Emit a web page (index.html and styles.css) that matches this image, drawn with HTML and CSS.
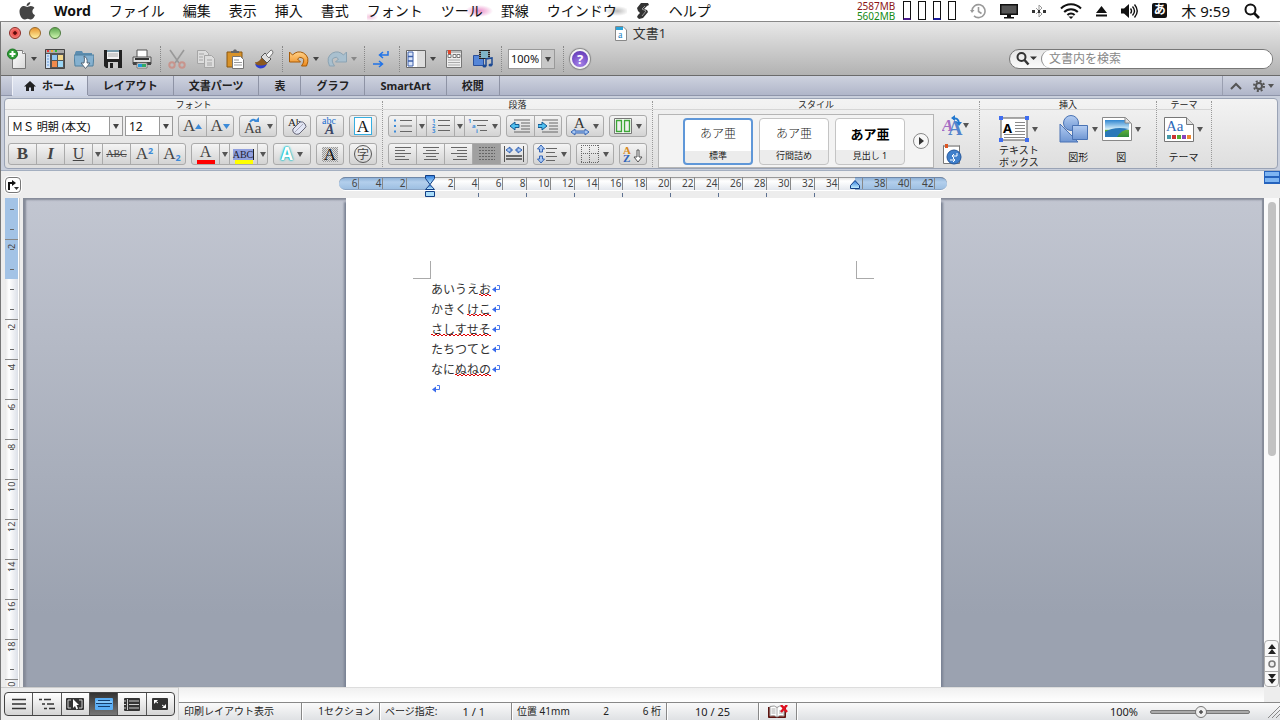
FILE: index.html
```html
<!DOCTYPE html>
<html lang="ja">
<head>
    <meta charset="UTF-8">
    <meta name="viewport" content="width=device-width, initial-scale=1.0">
    <title>文書1</title>
    <link rel="stylesheet" href="styles.css">
</head>
<body>
    <!-- shared gradients -->
    <svg class="defs" width="0" height="0" aria-hidden="true">
        <defs>
            <linearGradient id="blue" x1="0" y1="0" x2="0" y2="1"><stop offset="0" stop-color="#b4cdf2"/><stop offset="1" stop-color="#6f96d2"/></linearGradient>
            <linearGradient id="orange" x1="0" y1="0" x2="0" y2="1"><stop offset="0" stop-color="#ffd28a"/><stop offset="1" stop-color="#ee8a1c"/></linearGradient>
            <linearGradient id="paper" x1="0" y1="0" x2="1" y2="1"><stop offset="0" stop-color="#fff"/><stop offset="1" stop-color="#d8d8d8"/></linearGradient>
            <linearGradient id="marker" x1="0" y1="0" x2="0" y2="1"><stop offset="0" stop-color="#2b79dd"/><stop offset="1" stop-color="#c9f2ff"/></linearGradient>
            <linearGradient id="photo" x1="0" y1="0" x2="0" y2="1"><stop offset="0" stop-color="#2f86d0"/><stop offset=".55" stop-color="#d9f1fb"/><stop offset=".6" stop-color="#5fae3a"/><stop offset="1" stop-color="#2f8a3c"/></linearGradient>
        </defs>
    </svg>

    <nav class="menubar">
        <a href="#" class="apple" aria-label="Apple">
            <svg width="18" height="20" viewBox="0 0 18 20"><path fill="#444" d="M12.3 1c.1 2-1.600 4-3.700 4C8.400 3.100 10.300 1.200 12.300 1zM9.200 6c.8 0 2-1 3.700-1 1.300 0 2.700.7 3.500 1.900-3 1.800-2.500 5.900.6 7.100-.6 1.800-2.200 4.500-4 4.500-1.300 0-1.700-.8-3.300-.8s-2.100.8-3.300.8C4 18.500 1.500 14.300 1.500 10.700 1.500 7 3.800 5.100 6 5.100c1.500 0 2.600.9 3.200.9z"/></svg>
        </a>
        <a href="#" class="app">Word</a>
        <a href="#">ファイル</a>
        <a href="#">編集</a>
        <a href="#">表示</a>
        <a href="#">挿入</a>
        <a href="#">書式</a>
        <a href="#" class="petal-left">フォント</a>
        <a href="#" class="petal">ツール</a>
        <a href="#">罫線</a>
        <a href="#" class="petal-gray">ウインドウ</a>
        <a href="#" aria-label="スクリプト">
            <svg width="16" height="18" viewBox="0 0 16 18"><path fill="#333" d="M6 1h7l1 2-2 1-3 3 3 1 1 2-5 6-4 1-2-2 1-2 2-2-2-2-1-3z"/><path d="M10 4L7 7l4 2-4 5" fill="none" stroke="#999"/></svg>
        </a>
        <a href="#">ヘルプ</a>
        <div class="menu-extras">
            <div class="meters">
                <div class="memory"><span class="used">2587MB</span><span class="free">5602MB</span></div>
                <div class="cores"><i class="purple"></i><i></i><i class="navy"></i><i></i></div>
            </div>
            <svg width="16" height="18" viewBox="0 0 16 18" fill="none" stroke="#999" stroke-width="1.600"><path d="M2 9a6.500 6.500 0 1 1 2 4.800M8.500 5v4.500l3 2"/><path d="M0 8h4.500L2 11z" fill="#999" stroke="none"/></svg>
            <svg width="18" height="16" viewBox="0 0 18 16"><path d="M0 1h18v11H0z" fill="#111"/><path d="M1.500 2.500h15v8h-15z" fill="#555"/><path d="M7 12h4v2h3v1.500H4V14h3z" fill="#111"/></svg>
            <svg width="14" height="16" viewBox="0 0 14 16" stroke="#999" fill="none"><path d="M4 5l6 6-3 3V2l3 3-6 6"/><path d="M0 7h3v3H0zM11 7h3v3h-3zM6 7h2v3H6z" fill="#333" stroke="none"/></svg>
            <svg width="22" height="18" viewBox="0 0 22 18" fill="none" stroke="#111" stroke-width="2"><path d="M1 6.500a14 14 0 0 1 20 0M4.200 10a9.500 9.500 0 0 1 13.600 0M7.400 13a5 5 0 0 1 7.200 0"/><path d="M8.500 14.500h5L11 17z" fill="#111" stroke="none"/></svg>
            <svg width="11" height="12" viewBox="0 0 11 12" fill="#111"><path d="M5.500 1L11 8H0zM0 9.500h11v2H0z"/></svg>
            <svg width="17" height="16" viewBox="0 0 17 16" fill="none" stroke="#111" stroke-width="1.400"><path d="M0 5.500h3L8 1v14l-5-4.500H0z" fill="#111" stroke="none"/><path d="M9.500 5.500q2 2.500 0 5M11.500 3.500q4 4.500 0 9M13.500 1.500q5.500 6.500 0 13"/></svg>
            <span class="ime">あ</span>
            <span class="clock">木 9:59</span>
            <svg width="16" height="16" viewBox="0 0 16 16" fill="none" stroke="#111"><circle cx="6.500" cy="6.500" r="5" stroke-width="2"/><path d="M10 10l5 5" stroke-width="2.600"/></svg>
        </div>
    </nav>

    <div class="window">
        <header class="titlebar">
            <div class="title-row">
                <div class="lights">
                    <button class="light red" aria-label="閉じる"></button>
                    <button class="light yellow" aria-label="しまう"></button>
                    <button class="light green" aria-label="拡大"></button>
                </div>
                <h1>
                    <svg width="12" height="15" viewBox="0 0 12 15"><path d="M.5.5H8l3.500 3.500v10.500H.5z" fill="#fff" stroke="#888"/><path d="M1 1h7v3H1z" fill="#29a3d9"/><text x="3" y="12" class="doc-letter">a</text></svg>
                    文書1
                </h1>
            </div>
            <div class="toolbar">
                <button aria-label="新規作成"><svg width="20" height="22" viewBox="0 0 20 22"><path d="M5.500 2.500h10l3 3v15h-13z" fill="url(#paper)" stroke="#777"/><path d="M15.500 2.500v3h3" fill="#fff" stroke="#888"/><circle cx="5.500" cy="6" r="5" fill="#2f9e36" stroke="#1d7424"/><path d="M5.500 3v6M2.500 6h6" stroke="#fff" stroke-width="2"/></svg></button>
                <button class="drop" aria-label="新規作成メニュー"></button>
                <button aria-label="テンプレート"><svg width="20" height="20" viewBox="0 0 20 20"><path d="M.5.5h19v19H.5z" fill="#555" stroke="#444"/><path d="M1 1h18v3H1z" fill="#aaa"/><path d="M2 1h2v2H2z" fill="#e33"/><path d="M6 1h2v2H6z" fill="#ea3"/><path d="M10 1h2v2h-2z" fill="#3b3"/><path d="M1 5h4v14H1z" fill="#cfe2f7"/><path d="M2 7h2M2 10h2M2 13h2M2 16h2" stroke="#6a9bd8"/><path d="M7 6h5v5H7z" fill="#8ec6f2"/><path d="M13 6h5v5h-5z" fill="#f6d98b"/><path d="M7 12h5v6H7z" fill="#f08a4b"/><path d="M13 12h5v6h-5z" fill="#9bd6f5"/></svg></button>
                <button aria-label="開く"><svg width="20" height="20" viewBox="0 0 20 20"><path d="M1 4l1-2h6l1 2h9v12H1z" fill="#5c8db0"/><path d="M0 6h20l-1 11H1z" fill="#85b1d0" stroke="#51809f"/><path d="M10 7q4 2 3 7h3l-4.500 5.500L7 14h3q1-4 0-7z" fill="#fff" stroke="#567"/></svg></button>
                <button aria-label="保存"><svg width="20" height="20" viewBox="0 0 20 20"><path d="M1 1h18v18H3l-2-2z" fill="#222"/><path d="M4 1h12v9H4z" fill="#f2f2f2"/><path d="M4 1h12v2H4z" fill="#79a"/><path d="M5 5h10M5 7h10" stroke="#aaa"/><path d="M5 13h10v6H5z" fill="#ccc"/><path d="M7 14h3v5H7z" fill="#222"/></svg></button>
                <button aria-label="プリント"><svg width="20" height="20" viewBox="0 0 20 20"><path d="M5 1h10v8H5z" fill="#fff" stroke="#555"/><path d="M1 8h18v7H1z" fill="#ddd" stroke="#555"/><path d="M3 9h14v2H3z" fill="#333"/><path d="M1 13h18v3H1z" fill="#444"/><path d="M5 14h10v5H5z" fill="#fff" stroke="#777"/><path d="M6 15h4v3H6z" fill="#29d"/><path d="M10 15h4v3h-4z" fill="#3a6"/></svg></button>
                <span class="sep"></span>
                <button disabled aria-label="カット"><svg width="20" height="20" viewBox="0 0 20 20" fill="none"><path d="M3 1l9 13M17 1L8 14" stroke="#999" stroke-width="1.600"/><circle cx="5" cy="16" r="2.700" stroke="#c8948c" stroke-width="2"/><circle cx="15" cy="16" r="2.700" stroke="#c8948c" stroke-width="2"/></svg></button>
                <button disabled aria-label="コピー"><svg width="20" height="20" viewBox="0 0 20 20" fill="#ddd" stroke="#a5a5a5"><path d="M1.500 1.500h8l3 3v10h-11z"/><path d="M8.500 6.500h7l3 3v9h-10z"/><path d="M3 5h5M3 8h4M3 11h4M11 11h5M11 14h5M11 16h5"/></svg></button>
                <button aria-label="ペースト"><svg width="20" height="20" viewBox="0 0 20 20"><path d="M2 3h15v15H2z" fill="#d8932a" stroke="#8a5610"/><path d="M6 4V2h2l1-1.500h2L12 2h2v2z" fill="#666"/><path d="M7.500 7.500h8l3 3v9h-11z" fill="#fff" stroke="#777"/><path d="M9 11h5M9 13.500h8M9 16h8" stroke="#999"/></svg></button>
                <button aria-label="書式のコピー"><svg width="20" height="20" viewBox="0 0 20 20"><path d="M1 13q4 1 7-5l6 5q-3 6-8 6-4-1-5-6z" fill="#8c5a20"/><path d="M1 15q6 3 12 0-2 4.500-7 4.500-4-1-5-4.500z" fill="#2b3fd4"/><path d="M7 8l4-4 6 6-4 4z" fill="#ddd" stroke="#555"/><path d="M12 6l5-5q2 0 2 3l-4 5z" fill="#f4f4f4" stroke="#777"/></svg></button>
                <span class="sep"></span>
                <button aria-label="取り消し"><svg width="20" height="18" viewBox="0 0 20 18"><path d="M.5 2l3 3q5-5 11-2 7 4 3 13h-5q4-6 1-8-3-2-5 1l3 3H.5z" fill="url(#orange)" stroke="#a85b06"/></svg></button>
                <button class="drop" aria-label="取り消しメニュー"></button>
                <button disabled aria-label="やり直し"><svg width="20" height="18" viewBox="0 0 20 18"><path d="M19.500 2l-3 3q-5-5-11-2-7 4-3 13h5q-4-6-1-8 3-2 5 1l-3 3h11z" fill="#a9c0cf" stroke="#8ba3b3"/></svg></button>
                <button class="drop dim" disabled aria-label="やり直しメニュー"></button>
                <span class="sep"></span>
                <button aria-label="編集記号"><svg width="20" height="20" viewBox="0 0 20 20" fill="none" stroke="#2073e8" stroke-width="1.500"><path d="M17 2v4h-8M12 3L8.500 6l3.500 3M2 15h9M8 12l3.500 3L8 18"/></svg></button>
                <span class="sep"></span>
                <button aria-label="サイドバー"><svg width="20" height="20" viewBox="0 0 20 20"><path d="M.5 1.500h19v17H.5z" fill="#fff" stroke="#666"/><path d="M2 3h5v14H2z" fill="#dbe6fa" stroke="#3c5fa8"/><path d="M2 7.500h5M2 12h5" stroke="#3c5fa8" stroke-width="1.500"/><path d="M11 2h8v16h-8z" fill="#ddd"/></svg></button>
                <button class="drop" aria-label="サイドバーメニュー"></button>
                <button aria-label="ツールボックス"><svg width="20" height="20" viewBox="0 0 20 20"><path d="M2.500 1.500h15v17h-15z" fill="#eee" stroke="#777"/><path d="M3 2h14v2H3z" fill="#bbb"/><path d="M4 1h3v4H4z" fill="#e0462b"/><path d="M4 5.500h3v3H4zM9 5.500h3v3H9zM13 5.500h3v3h-3z" fill="#fff" stroke="#777"/><path d="M4 11h12M4 13.500h12M4 16h12" stroke="#aaa"/></svg></button>
                <button aria-label="メディア"><svg width="20" height="20" viewBox="0 0 20 20"><path d="M.5 6.500h10v10H.5z" fill="#5586d8" stroke="#2a4f9a"/><path d="M6 1h11v9H6z" fill="#222"/><path d="M8 2h7v7H8z" fill="#7fb5c8"/><path d="M7 2v7M16 2v7" stroke="#eee" stroke-dasharray="1 1"/><path d="M13 17v-7l6-1v7" fill="none" stroke="#1c4a94" stroke-width="1.500"/><ellipse cx="11.500" cy="17" rx="2" ry="1.600" fill="#1c4a94"/><ellipse cx="17.500" cy="16" rx="2" ry="1.600" fill="#1c4a94"/></svg></button>
                <span class="sep"></span>
                <span class="combo zoom-combo"><select aria-label="ズーム"><option>100%</option></select></span>
                <span class="sep"></span>
                <button aria-label="ヘルプ" class="help">?</button>
                <label class="search">
                    <svg width="22" height="16" viewBox="0 0 22 16" fill="none" stroke="#333"><circle cx="5.500" cy="6" r="4" stroke-width="2"/><path d="M8.500 9l4 4.500" stroke-width="2.500"/><path d="M14 5.500h7L17.500 9z" fill="#333" stroke="none"/></svg>
                    <input type="search" placeholder="文書内を検索" aria-label="文書内を検索">
                </label>
            </div>
        </header>

        <nav class="tabs">
            <a href="#" class="active"><svg width="12" height="10" viewBox="0 0 12 10"><path d="M6 0l6 5.500h-2V10H7V6.500H5V10H2V5.500H0z" fill="#222"/></svg>ホーム</a>
            <a href="#">レイアウト</a>
            <a href="#">文書パーツ</a>
            <a href="#">表</a>
            <a href="#">グラフ</a>
            <a href="#">SmartArt</a>
            <a href="#">校閲</a>
            <div class="tab-tools">
                <button aria-label="リボンを隠す"><svg width="12" height="8" viewBox="0 0 12 8"><path d="M1 7l5-5 5 5" fill="none" stroke="#555" stroke-width="2"/></svg></button>
                <button aria-label="リボンの設定"><svg width="22" height="12" viewBox="0 0 22 12"><circle cx="6" cy="6" r="3" fill="none" stroke="#555" stroke-width="2"/><circle cx="6" cy="6" r="5" fill="none" stroke="#555" stroke-width="2" stroke-dasharray="2 1.930"/><path d="M15 4h6l-3 4z" fill="#555"/></svg></button>
            </div>
        </nav>

        <div class="ribbon">
            <div class="panel">
                <section class="group g-font">
                    <h2>フォント</h2>
                    <div class="rows">
                        <div class="row">
                            <div class="combos">
                                <span class="combo font-combo"><select aria-label="フォント名"><option>ＭＳ 明朝 (本文)</option></select></span>
                                <span class="combo size-combo"><select aria-label="サイズ"><option>12</option></select></span>
                            </div>
                            <div class="set">
                                <button aria-label="拡大">A<svg width="7" height="5" viewBox="0 0 7 5"><path d="M0 5l3.500-5L7 5z" fill="#3b8ad8"/></svg></button>
                                <button aria-label="縮小">A<svg width="7" height="5" viewBox="0 0 7 5"><path d="M0 0h7L3.500 5z" fill="#3b8ad8"/></svg></button>
                            </div>
                            <div class="set"><button class="wide" aria-label="文字種の変換"><svg width="19" height="20" viewBox="0 0 19 20"><text x="0" y="17" class="aa">Aa</text><path d="M6 6q3-4 6-1" fill="none" stroke="#3b8ad8" stroke-width="2"/><path d="M10 6h5V1z" fill="#3b8ad8"/></svg><i class="tri"></i></button></div>
                            <div class="set"><button aria-label="書式のクリア"><svg width="20" height="20" viewBox="0 0 20 20"><text x="1" y="10" class="ab">Ab</text><path d="M6 13l7-7q3-1 5 2t0 4l-6 6q-3 1-5-1t-1-4z" fill="#e2e6f5" stroke="#667"/><path d="M8 16l8-8" stroke="#aab"/></svg></button></div>
                            <div class="set"><button aria-label="ルビ"><svg width="20" height="20" viewBox="0 0 20 20"><text x="2" y="8" class="abc">abc</text><text x="5" y="18" class="italic-a">A</text></svg></button></div>
                            <div class="set"><button aria-label="囲み線"><span class="boxed">A</span></button></div>
                        </div>
                        <div class="row">
                            <div class="set">
                                <button class="bold">B</button>
                                <button class="italic">I</button>
                                <button class="under">U</button>
                                <button class="caret" aria-label="下線の種類"><i class="tri"></i></button>
                                <button class="strike">ABC</button>
                                <button>A<sup>2</sup></button>
                                <button>A<sub>2</sub></button>
                            </div>
                            <div class="set">
                                <button class="color-red">A</button>
                                <button class="caret" aria-label="文字の色"><i class="tri"></i></button>
                                <button class="marker"><span>ABC</span></button>
                                <button class="caret" aria-label="蛍光ペンの色"><i class="tri"></i></button>
                            </div>
                            <div class="set"><button class="wide"><span class="glow">A</span><i class="tri"></i></button></div>
                            <div class="set"><button><span class="shade">A</span></button></div>
                            <div class="set"><button><span class="circled">字</span></button></div>
                        </div>
                    </div>
                </section>

                <section class="group g-para">
                    <h2>段落</h2>
                    <div class="rows">
                        <div class="row">
                            <div class="set">
                                <button aria-label="箇条書き"><svg width="18" height="14" viewBox="0 0 18 14"><path d="M0 1.500h2M0 7h2M0 12.500h2" stroke="#3b8ad8" stroke-width="2"/><path d="M6 1.500h12M6 7h12M6 12.500h12" stroke="#666"/></svg></button>
                                <button class="caret" aria-label="行頭文字"><i class="tri"></i></button>
                                <button aria-label="段落番号"><svg width="18" height="18" viewBox="0 0 18 18"><text x="0" y="6" class="num">1</text><text x="0" y="11" class="num">2</text><text x="0" y="16" class="num">3</text><path d="M6 3.500h12M6 8.500h12M6 13.500h12" stroke="#666"/></svg></button>
                                <button class="caret" aria-label="番号の種類"><i class="tri"></i></button>
                                <button class="wide" aria-label="アウトライン"><svg width="20" height="18" viewBox="0 0 20 18"><text x="0" y="6" class="num">1</text><text x="4" y="11" class="num">a</text><text x="8" y="16" class="num">i</text><path d="M5 3.500h15M9 8.500h9M12 13.500h7" stroke="#666"/></svg><i class="tri"></i></button>
                            </div>
                            <div class="set">
                                <button aria-label="インデント解除"><svg width="20" height="14" viewBox="0 0 20 14"><path d="M4 1h16M11 4h9M11 7h9M11 10h9M4 13h16" stroke="#666"/><path d="M0 7l5-4v2.500h4v3H5V11z" fill="#4fc0f0" stroke="#145a93"/></svg></button>
                                <button aria-label="インデント"><svg width="20" height="14" viewBox="0 0 20 14"><path d="M4 1h16M11 4h9M11 7h9M11 10h9M4 13h16" stroke="#666"/><path d="M9 7L4 3v2.500H0v3h4V11z" fill="#4fc0f0" stroke="#145a93"/></svg></button>
                            </div>
                            <div class="set"><button class="wide" aria-label="拡張書式"><svg width="18" height="20" viewBox="0 0 18 20"><text x="3" y="12" class="mid-a">A</text><path d="M0 16l4-3v2h10v-2l4 3-4 3v-2H4v2z" fill="#a8c7f2" stroke="#3565b5"/></svg><i class="tri"></i></button></div>
                            <div class="set"><button class="wide" aria-label="段組み"><svg width="18" height="16" viewBox="0 0 18 16"><path d="M.5.5h17v15H.5z" fill="#fff" stroke="#777"/><path d="M2.500 2.500h5v11h-5zM10.500 2.500h5v11h-5z" fill="#eee" stroke="#3da637" stroke-width="1.400"/></svg><i class="tri"></i></button></div>
                        </div>
                        <div class="row">
                            <div class="set">
                                <button aria-label="左揃え"><svg width="16" height="14" viewBox="0 0 16 14"><path d="M0 .5h16M0 3.500h10M0 6.500h16M0 9.500h10M0 12.500h14" stroke="#666"/></svg></button>
                                <button aria-label="中央揃え"><svg width="16" height="14" viewBox="0 0 16 14"><path d="M0 .5h16M3 3.500h10M0 6.500h16M3 9.500h10M1 12.500h14" stroke="#666"/></svg></button>
                                <button aria-label="右揃え"><svg width="16" height="14" viewBox="0 0 16 14"><path d="M0 .5h16M6 3.500h10M0 6.500h16M6 9.500h10M2 12.500h14" stroke="#666"/></svg></button>
                                <button class="on" aria-label="両端揃え"><svg width="16" height="14" viewBox="0 0 16 14"><path d="M0 .5h16M0 3.500h16M0 6.500h16M0 9.500h16M0 12.500h16" stroke="#666" stroke-dasharray="2 1"/></svg></button>
                                <button aria-label="均等割り付け"><svg width="20" height="16" viewBox="0 0 20 16"><path d="M.5 0v16M19.500 0v16" stroke="#555"/><path d="M2 4l4-3v2h2v2H6v2zM18 4l-4-3v2h-2v2h2v2z" fill="#a8c7f2" stroke="#3565b5"/><path d="M2 10h16M2 13h16" stroke="#444" stroke-width="1.500"/></svg></button>
                            </div>
                            <div class="set"><button class="wide" aria-label="行間"><svg width="20" height="18" viewBox="0 0 20 18"><path d="M4 0l3.500 4h-2v3h-3V4h-2zM4 18l3.500-4h-2v-3h-3v3h-2z" fill="#a8c7f2" stroke="#3565b5"/><path d="M9 3.500h11M9 7.500h9M9 11.500h11M9 15.500h9" stroke="#666"/></svg><i class="tri"></i></button></div>
                            <div class="set"><button class="wide" aria-label="罫線"><svg width="18" height="18" viewBox="0 0 18 18"><path d="M0 .5h18M0 8.500h18M0 17.500h18M.5 0v18M8.500 0v18M17.500 0v18" fill="none" stroke="#666" stroke-dasharray="1 1"/></svg><i class="tri"></i></button></div>
                            <div class="set"><button aria-label="並べ替え"><svg width="22" height="20" viewBox="0 0 22 20"><text x="1" y="10" class="sort-a">A</text><text x="1" y="18" class="sort-z">Z</text><path d="M15 6h2v7h3l-4 5-4-5h3z" fill="#fff" stroke="#555"/></svg></button></div>
                        </div>
                    </div>
                </section>

                <section class="group g-style">
                    <h2>スタイル</h2>
                    <div class="style-area">
                        <div class="gallery">
                            <button class="card selected"><span class="sample">あア亜</span><span class="name">標準</span></button>
                            <button class="card"><span class="sample">あア亜</span><span class="name">行間詰め</span></button>
                            <button class="card heading"><span class="sample">あア亜</span><span class="name">見出し 1</span></button>
                            <button class="more" aria-label="その他のスタイル"><svg width="16" height="16" viewBox="0 0 16 16"><circle cx="8" cy="8" r="7.500" fill="#f7f7f7" stroke="#888"/><path d="M6 4l5 4-5 4z" fill="#333"/></svg></button>
                        </div>
                        <div class="style-tools">
                            <button aria-label="スタイルの変更"><svg width="27" height="22" viewBox="0 0 27 22"><text x="0" y="16" class="purple-a">A</text><text x="6" y="20" class="blue-a">A</text><path d="M11 4q5-2 6 4" fill="none" stroke="#2278cf" stroke-width="2"/><path d="M13 0v6L9 3zM14 7h6l-3 4z" fill="#2278cf"/><path d="M21 8h6l-3 5z" fill="#555"/></svg></button>
                            <button aria-label="スタイルウィンドウ"><svg width="20" height="21" viewBox="0 0 20 21"><path d="M1.500 1.500h16v18h-16z" fill="#fff" stroke="#777"/><path d="M2 1h15v2H2z" fill="#aaa"/><path d="M3 0h3v4H3z" fill="#d52"/><circle cx="12" cy="13" r="7" fill="#3f7fcb" stroke="#24569b"/><path d="M15 9v3h-5m2-2l-2 2 2 2M8 16h5m-2-2l2 2-2 2" fill="none" stroke="#fff"/></svg></button>
                        </div>
                    </div>
                </section>

                <section class="group g-insert">
                    <h2>挿入</h2>
                    <div class="big-row">
                        <button class="big"><span class="pic"><svg width="30" height="26" viewBox="0 0 30 26"><path d="M2 2h26v22H2z" fill="#fff" stroke="#555"/><text x="4" y="17" class="box-a">A</text><path d="M16 6.500h10M16 9.500h10M16 12.500h10M16 15.500h10M5 18.500h21M5 21.500h21" stroke="#888"/><path d="M0 0h4v4H0zM26 0h4v4h-4zM0 22h4v4H0zM26 22h4v4h-4z" fill="#3f6df0"/></svg><i class="tri"></i></span>テキスト<br>ボックス</button>
                        <button class="big"><span class="pic"><svg width="30" height="28" viewBox="0 0 30 28"><path d="M1 9v18h18z" fill="url(#blue)" stroke="#4a73b4"/><circle cx="12" cy="8" r="7.500" fill="url(#blue)" stroke="#4a73b4"/><path d="M13.500 10.500h15v14h-15z" fill="url(#blue)" stroke="#4a73b4"/></svg><i class="tri"></i></span><span>図形</span></button>
                        <button class="big"><span class="pic"><svg width="30" height="28" viewBox="0 0 30 28"><path d="M.5 2.500h23l6 6v17H.5z" fill="#fff" stroke="#888"/><path d="M3 5h20v3h4v14H3z" fill="url(#photo)"/><path d="M3 17q9-6 24-3-8 1-12 8H3z" fill="#2a78b8"/><path d="M23 3v5h6" fill="#ddd" stroke="#888"/></svg><i class="tri"></i></span><span>図</span></button>
                    </div>
                </section>

                <section class="group g-theme">
                    <h2>テーマ</h2>
                    <div class="big-row">
                        <button class="big"><span class="pic"><svg width="30" height="28" viewBox="0 0 30 28"><path d="M.5 2.500h22l7 7v17H.5z" fill="#fff" stroke="#777"/><path d="M22.500 2.500v7h7" fill="#ddd" stroke="#777"/><text x="2" y="16" class="theme-aa">Aa</text><path d="M3 20h4v4H3z" fill="#49a"/><path d="M8 20h4v4H8z" fill="#c33"/><path d="M13 20h4v4h-4z" fill="#5a3"/><path d="M18 20h4v4h-4z" fill="#84b"/><path d="M23 20h4v4h-4z" fill="#e83"/></svg><i class="tri"></i></span><span>テーマ</span></button>
                    </div>
                </section>
            </div>
        </div>

        <div class="ruler-row">
            <button class="tab-kind" aria-label="タブの種類"><svg width="12" height="12" viewBox="0 0 12 12"><path d="M2 11V4h4" fill="none" stroke="#111" stroke-width="2"/><path d="M5 1l4 3-4 3z" fill="#111"/><path d="M7 8h5l-2.500 3z" fill="#333"/></svg></button>
            <div class="ruler">
                <div class="scale">
                    <div class="margin-left"><span>6</span><span>4</span><span>2</span></div>
                    <div class="measure">
                        <span>2</span><span>4</span><span>6</span><span>8</span><span>10</span><span>12</span><span>14</span><span>16</span><span>18</span><span>20</span><span>22</span><span>24</span><span>26</span><span>28</span><span>30</span><span>32</span><span>34</span>
                        <svg class="indent-left" width="10" height="23" viewBox="0 0 10 23"><path d="M.5.500h9v3L5 9.500.5 3.500z" fill="url(#marker)" stroke="#123f85"/><path d="M5 9.500l4.500 5H.5z" fill="url(#marker)" stroke="#123f85"/><path d="M.5 16.500h9v5h-9z" fill="#a9ddfa" stroke="#123f85"/></svg>
                        <svg class="indent-right" width="10" height="9" viewBox="0 0 10 9"><path d="M5 .5l4.500 5v3h-9v-3z" fill="url(#marker)" stroke="#123f85"/></svg>
                    </div>
                    <div class="margin-right"><span></span><span>38</span><span>40</span><span>42</span></div>
                </div>
                <div class="stops"></div>
            </div>
            <button class="split" aria-label="分割"></button>
        </div>

        <div class="workspace">
            <div class="v-ruler">
                <div class="v-cell blue"></div>
                <div class="v-cell blue line"><span>2</span></div>
                <div class="v-cell"></div>
                <div class="v-cell line"><span>2</span></div>
                <div class="v-cell line"><span>4</span></div>
                <div class="v-cell line"><span>6</span></div>
                <div class="v-cell line"><span>8</span></div>
                <div class="v-cell line"><span>10</span></div>
                <div class="v-cell line"><span>12</span></div>
                <div class="v-cell line"><span>14</span></div>
                <div class="v-cell line"><span>16</span></div>
                <div class="v-cell line"><span>18</span></div>
                <div class="v-cell line"><span>20</span></div>
            </div>
            <main class="canvas">
                <article class="page">
                    <div class="crops"><i class="crop-left"></i><i class="crop-right"></i></div>
                    <div class="body-text">
                        <p>あいうえ<u>お</u><svg class="ret" width="8" height="8" viewBox="0 0 8 8"><use href="#ret"/></svg></p>
                        <p>かきく<u>けこ</u><svg class="ret" width="8" height="8" viewBox="0 0 8 8"><use href="#ret"/></svg></p>
                        <p><u>さしすせそ</u><svg class="ret" width="8" height="8" viewBox="0 0 8 8"><use href="#ret"/></svg></p>
                        <p>たちつてと<svg class="ret" width="8" height="8" viewBox="0 0 8 8"><use href="#ret"/></svg></p>
                        <p>なに<u>ぬねの</u><svg class="ret" width="8" height="8" viewBox="0 0 8 8"><use href="#ret"/></svg></p>
                        <p><svg class="ret" width="8" height="8" viewBox="0 0 8 8"><g id="ret"><path d="M5 .5h2.500v4H3" fill="none" stroke="#4a78ee"/><path d="M4 1.500v6l-4-3z" fill="#3b6cec"/></g></svg></p>
                    </div>
                </article>
            </main>
            <div class="scrollbar">
                <div class="track"><div class="thumb"></div></div>
                <div class="browse">
                    <button aria-label="前のページ"><svg width="8" height="10" viewBox="0 0 8 10"><path d="M4 0l4 5H0zM4 5l4 5H0z" fill="#222"/></svg></button>
                    <button aria-label="ジャンプ"><svg width="8" height="8" viewBox="0 0 8 8"><circle cx="4" cy="4" r="3" fill="#eee" stroke="#777" stroke-width="1.500"/></svg></button>
                    <button aria-label="次のページ"><svg width="8" height="10" viewBox="0 0 8 10"><path d="M0 0h8L4 5zM0 5h8l-4 5z" fill="#222"/></svg></button>
                </div>
            </div>
        </div>

        <footer class="footer">
            <div class="views">
                <div class="view-set">
                    <button aria-label="下書き"><svg width="16" height="12" viewBox="0 0 16 12"><path d="M1 1.500h14M1 6h14M1 10.500h14" stroke="#333" stroke-width="1.600"/></svg></button>
                    <button aria-label="アウトライン"><svg width="16" height="12" viewBox="0 0 16 12"><path d="M0 1.500h3M5 1.500h7M3 6h3M8 6h7M5 10.500h3M10 10.500h6" stroke="#333" stroke-width="1.600"/></svg></button>
                    <button aria-label="発行レイアウト"><svg width="18" height="12" viewBox="0 0 18 12"><rect width="18" height="12" rx="1" fill="#333"/><path d="M5 2H2v8h3M13 2h3v8h-3" fill="none" stroke="#ccc"/><path d="M7 1v9l2-2 1.500 3.500 1.500-1L10.500 7H13z" fill="#fff"/></svg></button>
                    <button class="on" aria-label="印刷レイアウト"><svg width="18" height="12" viewBox="0 0 18 12"><rect width="18" height="12" rx="1" fill="#5aaef5"/><path d="M3 2.500h12M1 5.500h16M3 8.500h12" stroke="#143d6e"/><path d="M1 4h16" stroke="#aee0ff"/></svg></button>
                    <button aria-label="ノート"><svg width="16" height="13" viewBox="0 0 16 13"><rect width="16" height="13" rx="1" fill="#333"/><path d="M5 3h10M5 6.500h10M5 10h10M3.500 1v11M0 3h2M0 6.500h2M0 10h2" stroke="#ccc"/></svg></button>
                    <button aria-label="全画面"><svg width="16" height="12" viewBox="0 0 16 12"><rect width="16" height="12" rx="1" fill="#333"/><path d="M2 2h4L2 6zM14 10h-4l4-4z" fill="#fff"/><path d="M3 3l3 2M13 9l-3-2" stroke="#fff"/></svg></button>
                </div>
            </div>
            <div class="foot-main">
                <div class="h-scroll"><div class="h-track"></div></div>
                <div class="status">
                    <span class="cell view-name">印刷レイアウト表示</span>
                    <span class="cell section">1セクション</span>
                    <span class="cell pages"><span>ページ指定:</span><span class="count">1 / 1</span></span>
                    <span class="cell place"><span>位置 41mm</span><span>2</span><span>6 桁</span></span>
                    <span class="cell words count">10 / 25</span>
                    <span class="cell proof"><svg width="20" height="14" viewBox="0 0 20 14"><path d="M.5 2v10.500h17V2" fill="#7a2018" stroke="#5a1410"/><path d="M2 1.500q5-1.500 7 1 2-2.500 7-1v9.500q-5-1-7 1-2-2-7-1z" fill="#fff" stroke="#999"/><path d="M9 2.500V12M3.500 4h4M3.500 6h4M3.500 8h4M11 6h4M11 8h4" stroke="#aaa"/><path d="M13 0l6 7M19 0l-6 7" stroke="#e01020" stroke-width="2.400"/></svg></span>
                    <div class="zoom">
                        <label for="zoom">100%</label>
                        <input type="range" id="zoom" min="0" max="100" value="51">
                        <svg width="12" height="12" viewBox="0 0 12 12"><path d="M0 12L12 0M4 12l8-8M8 12l4-4" stroke="#888"/></svg>
                    </div>
                </div>
            </div>
        </footer>
    </div>
</body>
</html>
```
FILE: styles.css
```css
* {
    box-sizing: border-box;
}

body {
    margin: 0;
    height: 100vh;
    display: flex;
    flex-direction: column;
    overflow: hidden;
    font-family: "Noto Sans", "Noto Sans CJK JP", sans-serif;
    font-size: 11px;
    color: #222;
    background: #fff;
}

a {
    color: inherit;
    text-decoration: none;
}

button {
    padding: 0;
    border: none;
    background: none;
    font-family: inherit;
    color: inherit;
    display: flex;
    align-items: center;
    justify-content: center;
}

h1, h2, p {
    margin: 0;
    font-weight: normal;
}

svg {
    display: block;
    flex: none;
}

.defs {
    position: absolute;
}

/* menu bar */
.menubar {
    flex: none;
    height: 22px;
    display: flex;
    align-items: center;
    gap: 18px;
    padding: 0 20px 0 18px;
    border-bottom: 1px solid #888;
    font-size: 14px;
    line-height: 20px;
    color: #111;
    white-space: nowrap;
}

.app {
    font-weight: bold;
}

.petal-left {
    background: radial-gradient(ellipse 8px 4px at 3px 16px, #f3c3dd, transparent);
}

.petal {
    padding-right: 10px;
    margin-right: -10px;
    background: radial-gradient(ellipse 14px 6px at 38px 10px, #ea8cc8, transparent);
}

.petal-gray {
    padding-right: 10px;
    margin-right: -10px;
    background: radial-gradient(ellipse 12px 5px at 70px 10px, #bbb, transparent);
}

.menu-extras {
    margin-left: auto;
    display: flex;
    align-items: center;
    gap: 14px;
}

.meters {
    display: flex;
    gap: 8px;
}

.memory {
    display: flex;
    flex-direction: column;
    font-size: 10px;
    line-height: 10px;
}

.used {
    color: #8c1515;
}

.free {
    color: #128a12;
}

.cores {
    display: flex;
    gap: 7px;
}

.cores i {
    width: 8px;
    height: 19px;
    border: 1px solid #111;
}

.cores .purple {
    border-bottom: 2px solid #4b1a8f;
}

.cores .navy {
    border-bottom: 2px solid #1a1a9f;
}

.ime {
    width: 15px;
    height: 15px;
    border-radius: 2px;
    background: #111;
    color: #fff;
    font-size: 12px;
    line-height: 14px;
    text-align: center;
    font-weight: bold;
}

.clock {
    font-size: 15px;
}

/* window */
.window {
    flex: 1;
    min-height: 0;
    display: flex;
    flex-direction: column;
    border-left: 1px solid #777;
    background: #ededed;
}

.titlebar {
    flex: none;
    background: linear-gradient(#e8e8e8, #b2b2b2);
    border-bottom: 1px solid #6b6b6b;
    border-radius: 5px 5px 0 0;
}

.title-row {
    height: 22px;
    display: flex;
    align-items: center;
    padding: 0 8px;
}

.lights {
    display: flex;
    gap: 8px;
    width: 60px;
}

.light {
    width: 12px;
    height: 12px;
    border-radius: 50%;
    border: 1px solid #666;
}

.red {
    background: radial-gradient(circle at 50% 50%, #5c0d0d 20%, #e94b47 30%, #ffb0a8);
    border-color: #8c2a26;
}

.yellow {
    background: linear-gradient(#e8962f, #fff0a0);
    border-color: #97682a;
}

.green {
    background: linear-gradient(#5fa851, #cdf5ae);
    border-color: #4c7a3e;
}

.title-row h1 {
    flex: 1;
    display: flex;
    justify-content: center;
    align-items: center;
    gap: 6px;
    padding-right: 60px;
    font-size: 13px;
    line-height: 20px;
    color: #333;
}

.doc-letter {
    font: 10px "Liberation Serif", serif;
    fill: #1c83c4;
}

.toolbar {
    height: 31px;
    display: flex;
    align-items: center;
    gap: 9px;
    padding: 0 7px 2px 6px;
}

.toolbar button {
    flex: none;
    width: 20px;
    height: 22px;
}

.toolbar .drop {
    width: 6px;
    margin: 0 -1px 0 -5px;
}

.drop::before {
    content: "";
    border: 3px solid transparent;
    border-top: 4px solid #444;
    border-bottom: none;
}

.drop.dim::before {
    border-top-color: #888;
}

.sep {
    height: 26px;
    margin: 0 -3px 0 -1px;
    border-left: 1px dotted #888;
}

.combo {
    position: relative;
    display: flex;
}

.combo select {
    appearance: none;
    width: 100%;
    height: 20px;
    padding: 0 3px;
    border: 1px solid #999;
    border-radius: 0;
    background: #fff;
    font-family: inherit;
    font-size: 12px;
    color: #111;
}

.combo::after {
    content: "";
    position: absolute;
    right: 4px;
    top: 8px;
    border: 3px solid transparent;
    border-top: 5px solid #444;
    border-bottom: none;
    pointer-events: none;
}

.zoom-combo {
    width: 47px;
}

.zoom-combo select {
    padding: 0 2px;
    font-size: 11px;
    background: linear-gradient(90deg, #fff 32px, #aaa 32px, #aaa 33px, #c8c8c8 33px);
}

.toolbar .help {
    height: 20px;
    border: 2px solid #f4f4f4;
    border-radius: 50%;
    background: radial-gradient(circle at 50% 80%, #a583e8, #5a2eb0);
    box-shadow: 0 0 1px 1px #888;
    color: #fff;
    font-size: 13px;
    font-weight: bold;
}

.search {
    margin-left: auto;
    width: 264px;
    height: 20px;
    display: flex;
    align-items: center;
    gap: 3px;
    padding-left: 6px;
    border: 1px solid #777;
    border-radius: 10px;
    background: linear-gradient(#e6e6e6, #fafafa);
}

.search input {
    flex: 1;
    min-width: 0;
    height: 18px;
    padding: 0 7px;
    border: none;
    border-left: 1px solid #888;
    border-radius: 9px;
    background: #fff;
    font-family: inherit;
    font-size: 12px;
}

.search input::placeholder {
    color: #888;
}

/* ribbon tabs */
.tabs {
    flex: none;
    height: 20px;
    display: flex;
    padding-left: 11px;
    background: linear-gradient(#ced2df, #b0b6c9);
    border-bottom: 1px solid #8f95aa;
    font-size: 11px;
    font-weight: bold;
    line-height: 19px;
}

.tabs a {
    padding: 0 15px;
    border-right: 1px solid #8e93a5;
    white-space: nowrap;
}

.tabs .active {
    display: flex;
    align-items: center;
    gap: 6px;
    padding: 0 12px 0 11px;
    border-left: 1px solid #f0f2f8;
    background: linear-gradient(#e4e8f2, #ccd3e4);
    box-shadow: 0 1px #ccd3e4;
}

.tab-tools {
    margin: 0 5px 0 auto;
    display: flex;
    gap: 11px;
    padding-left: 7px;
    border-left: 1px solid #9a9fb0;
}

/* ribbon */
.ribbon {
    flex: none;
    height: 75px;
    padding: 2px 2px 1px 3px;
    background: #c9cfdc;
    border-bottom: 1px solid #a4afc0;
}

.panel {
    height: 100%;
    display: flex;
    border: 1px solid #9aa3b5;
    border-radius: 4px;
    background: linear-gradient(#f3f3f3, #dedede);
}

.group {
    flex: none;
    height: 66px;
    margin-top: 2px;
    border-right: 1px dotted #999;
}

.group h2 {
    height: 11px;
    margin-top: -2px;
    border-bottom: 1px solid #d5d5d5;
    font-size: 9px;
    line-height: 12px;
    text-align: center;
    color: #222;
}

.g-font { width: 378px; }
.g-para { width: 270px; }
.g-style { width: 327px; }
.g-insert { width: 177px; }
.g-theme { width: 55px; }

.rows {
    display: flex;
    flex-direction: column;
    gap: 6px;
    padding: 5px 5px 0 3px;
}

.g-para .rows {
    padding-left: 5px;
}

.row {
    display: flex;
    justify-content: space-between;
    align-items: center;
}

.combos {
    display: flex;
    gap: 2px;
}

.font-combo {
    width: 115px;
}

.size-combo {
    width: 48px;
}

.row .combo select {
    background: linear-gradient(270deg, #f0f0f0 12px, #999 12px, #999 13px, #fff 13px);
}

.font-combo select {
    font-size: 11px;
}

.set {
    display: flex;
    border: 1px solid #aaa;
    border-radius: 3px;
    background: linear-gradient(#f4f4f4, #d3d3d3);
    overflow: hidden;
}

.set button {
    width: 28px;
    height: 20px;
    font-family: "Liberation Serif", serif;
    font-size: 17px;
    line-height: 20px;
    color: #444;
}

.set button + button {
    border-left: 1px solid #aaa;
}

.set button:first-child,
.set button:last-child {
    width: 27px;
}

.set button:only-child {
    width: 26px;
}

.set .caret,
.set .caret:last-child {
    width: 10px;
}

.set .wide,
.set .wide:only-child,
.set .wide:last-child {
    width: 36px;
    gap: 4px;
}

.set .on {
    background: #a0a0a0;
}

.tri {
    border: 3px solid transparent;
    border-top: 5px solid #555;
    border-bottom: none;
}

.aa {
    font: 15px "Liberation Serif", serif;
    fill: #444;
}

.ab {
    font: 11px "Liberation Serif", serif;
    fill: #222;
}

.abc {
    font: 10px "Liberation Serif", serif;
    fill: #1c6fd0;
}

.italic-a {
    font: italic bold 14px "Liberation Serif", serif;
    fill: #3a4666;
}

.mid-a {
    font: 15px "Liberation Serif", serif;
    fill: #333;
}

.num {
    font: bold 6px "Noto Sans", sans-serif;
    fill: #3b8ad8;
}

.sort-a {
    font: bold 11px "Liberation Serif", serif;
    fill: #d88a1c;
}

.sort-z {
    font: bold 11px "Liberation Serif", serif;
    fill: #2f62b8;
}

.boxed {
    width: 18px;
    height: 18px;
    border: 1px solid #36aee0;
    background: #fff;
    line-height: 17px;
    color: #111;
}

.set .bold {
    font-weight: bold;
}

.set .italic {
    font-style: italic;
    font-weight: bold;
}

.set .under {
    text-decoration: underline;
    font-size: 16px;
}

.set .strike {
    font-size: 10px;
    text-decoration: line-through;
}

.set sup, .set sub {
    font: bold 9px "Noto Sans", sans-serif;
    color: #3b8ad8;
}

.set sup {
    align-self: flex-start;
}

.set sub {
    align-self: flex-end;
}

.set .color-red {
    font-size: 16px;
    line-height: 16px;
    background: linear-gradient(red, red) 50% 16px / 18px 4px no-repeat;
    align-items: flex-start;
}

.set .marker {
    font-size: 10px;
    line-height: 11px;
    background: linear-gradient(#ff0, #ff0) 50% 16px / 18px 4px no-repeat;
    color: #223;
}

.marker span {
    background: #91a0df;
    border-right: 1px solid #222;
}

.glow {
    font: bold 17px "Noto Sans", sans-serif;
    line-height: 20px;
    color: #fff;
    text-shadow: 0 0 1px #00b4c0, 0 0 2px #22c8d0, 0 0 3px #22c8d0, 0 0 1px #00b4c0;
}

.shade {
    width: 16px;
    height: 15px;
    line-height: 15px;
    background: repeating-conic-gradient(#999 0 25%, #ddd 0 50%) 0 0 / 2px 2px;
    color: #111;
}

.circled {
    width: 18px;
    height: 18px;
    border: 1px solid #555;
    border-radius: 50%;
    font-family: "Noto Sans CJK JP", sans-serif;
    font-size: 12px;
    line-height: 16px;
}

/* style gallery */
.style-area {
    display: flex;
    gap: 8px;
    padding: 4px 0 0 5px;
}

.gallery {
    width: 276px;
    height: 54px;
    display: flex;
    align-items: center;
    gap: 6px;
    padding-left: 24px;
    border: 1px solid #b5b5b5;
    background: #f3f3f3;
}

.card {
    width: 70px;
    height: 47px;
    flex-direction: column;
    border: 1px solid #c4c4c4;
    border-radius: 4px;
    background: linear-gradient(#fff 31px, #ececec 31px);
}

.card.selected {
    border: 2px solid #5f97d8;
}

.sample {
    height: 30px;
    font-size: 12px;
    line-height: 30px;
    font-weight: 300;
}

.heading .sample {
    font-size: 13px;
    font-weight: bold;
    color: #000;
}

.name {
    height: 15px;
    font-size: 9px;
    line-height: 14px;
}

.more {
    margin-left: 2px;
}

.style-tools {
    display: flex;
    flex-direction: column;
    align-items: flex-start;
    gap: 7px;
    padding-top: 1px;
}

.purple-a {
    font: bold italic 17px "Liberation Serif", serif;
    fill: #a56cc4;
}

.blue-a {
    font: bold 20px "Liberation Serif", serif;
    fill: #5484cc;
}

/* large buttons */
.big-row {
    display: flex;
    gap: 4px;
    padding: 4px 0 0 19px;
}

.g-theme .big-row {
    padding-left: 7px;
}

.big {
    flex-direction: column;
    justify-content: flex-start;
    font-size: 10px;
    line-height: 12px;
}

.g-insert .big:first-child {
    margin-right: 16px;
}

.pic {
    height: 30px;
    display: flex;
    align-items: center;
    gap: 3px;
}

.pic + span {
    padding-top: 7px;
}

.box-a {
    font: bold 13px "Noto Sans", sans-serif;
}

.theme-aa {
    font: 15px "Liberation Serif", serif;
    fill: #2d68b8;
}

/* horizontal ruler */
.ruler-row {
    flex: none;
    height: 27px;
    display: flex;
    justify-content: space-between;
    align-items: flex-start;
}

.tab-kind {
    width: 16px;
    height: 16px;
    margin: 6px 0 0 4px;
    border: 1px solid #777;
    border-radius: 4px;
    background: #fff;
    box-shadow: 0 0 0 1px #fff;
}

.ruler {
    width: 608px;
    padding-top: 6px;
}

.scale {
    height: 13px;
    display: flex;
    border-radius: 7px;
    box-shadow: inset 0 1px #999, 0 1px #fff;
    font-size: 10px;
    line-height: 13px;
    color: #444;
    background: linear-gradient(#ddd, #fff 4px, #e4e8ee);
}

.scale span {
    width: 24px;
    border-right: 1px solid #888;
    text-align: right;
}

.margin-left, .margin-right {
    display: flex;
    background: linear-gradient(#8fb2d8, #b3cfec 4px, #9dbfe2);
    border-top: 1px solid #7088a8;
    border-bottom: 1px solid #8aa4c4;
    line-height: 11px;
}

.margin-left {
    width: 91px;
    border-radius: 7px 0 0 7px;
}

.margin-left span:first-child {
    width: 20px;
}

.measure {
    position: relative;
    flex: 1;
    display: flex;
}

.measure span:first-child {
    width: 25px;
}

.margin-right {
    width: 92px;
    border-radius: 0 7px 7px 0;
}

.margin-right span:first-child {
    width: 8px;
}

.indent-left {
    position: absolute;
    left: -5px;
    top: -2px;
}

.indent-right {
    position: absolute;
    right: -5px;
    top: 3px;
}

.stops {
    height: 4px;
    margin: 3px 131px 0 139px;
    background: repeating-linear-gradient(90deg, #5c7090 0 1px, transparent 1px 48px);
}

.split {
    width: 16px;
    height: 13px;
    border: 1px solid #2563bd;
    background: repeating-linear-gradient(#7eb5f2 0 4px, #2563bd 4px 6px);
}

/* document area */
.workspace {
    flex: 1;
    min-height: 0;
    display: flex;
}

.v-ruler {
    width: 14px;
    margin: 0 4px;
    overflow: hidden;
    border-right: 1px solid #fff;
    box-shadow: 1px 0 #ccc;
    background: linear-gradient(90deg, #e8e8e8, #fff 4px, #dce0e8);
}

.v-cell {
    height: 40px;
    border-top: 1px solid transparent;
    background: linear-gradient(#666, #666) 5px 9px / 4px 1px no-repeat, linear-gradient(#666, #666) 5px 29px / 4px 1px no-repeat;
}

.v-cell.line {
    border-top-color: #888;
}

.v-cell.blue {
    background-color: #a3c3e6;
}

.v-cell:first-child {
    height: 41px;
    background-position: 5px 10px, 5px 30px;
}

.v-cell span {
    display: block;
    writing-mode: vertical-rl;
    transform: rotate(180deg);
    width: 13px;
    height: 13px;
    line-height: 13px;
    font-size: 9px;
    color: #444;
    text-align: center;
}

.canvas {
    flex: 1;
    display: flex;
    justify-content: center;
    background: linear-gradient(#c2c6d1, #9ba2b0 85%);
    box-shadow: inset 3px 2px 2px #858b98, inset -2px 0 1px #858b98;
}

.page {
    width: 595px;
    padding: 63px 67px 0;
    background: #fff;
    box-shadow: -3px 3px 2px -1px #7b8394, 3px 3px 2px -1px #7b8394;
}

.crops {
    display: flex;
    justify-content: space-between;
    height: 18px;
}

.crop-left, .crop-right {
    width: 18px;
    border-bottom: 1px solid #aaa;
}

.crop-left {
    border-right: 1px solid #aaa;
}

.crop-right {
    border-left: 1px solid #aaa;
}

.body-text {
    padding-left: 18px;
    font-family: "Noto Sans CJK JP", sans-serif;
    font-size: 12px;
    font-weight: 300;
    color: #333;
}

.body-text p {
    height: 20px;
    display: flex;
    align-items: center;
    line-height: 14px;
}

/* spelling marks: two dotted rows shifted by half a step */
.body-text u {
    text-decoration: none;
    background:
        repeating-linear-gradient(90deg, #e00000 0 2px, transparent 2px 4px) 0 12px / 100% 1px no-repeat,
        repeating-linear-gradient(90deg, transparent 0 2px, #e00000 2px 4px) 0 13px / 100% 1px no-repeat;
}

.ret {
    margin-left: 1px;
}

.scrollbar {
    width: 16px;
    display: flex;
    flex-direction: column;
    background: #fafafa;
    border-right: 1px solid #aaa;
}

.track {
    flex: 1;
    padding: 4px 3px 0 4px;
}

.thumb {
    height: 58%;
    border-radius: 4px;
    background: #c2c2c2;
}

.browse {
    border: 1px solid #aaa;
    border-radius: 4px;
    background: #f8f8f8;
}

.browse button {
    width: 100%;
    height: 15px;
}

.browse button + button {
    border-top: 1px solid #aaa;
}

/* bottom bars */
.footer {
    flex: none;
    height: 33px;
    display: flex;
}

.views {
    width: 178px;
    padding: 4px 3px 0;
    border-right: 1px solid #ccc;
    border-top: 1px solid #ccc;
}

.view-set {
    width: 171px;
    display: flex;
    border: 1px solid #444;
    border-radius: 4px;
    overflow: hidden;
    background: linear-gradient(#fff, #d5d5d5);
}

.view-set button {
    flex: 1;
    height: 22px;
}

.view-set button + button {
    border-left: 1px solid #555;
}

.view-set .on {
    background: linear-gradient(#333, #777);
}

.foot-main {
    flex: 1;
    display: flex;
    flex-direction: column;
}

.h-scroll {
    height: 15px;
    padding-right: 16px;
}

.h-track {
    height: 100%;
    border-top: 1px solid #ddd;
    background: linear-gradient(#f0f0f0, #fff);
}

.status {
    flex: 1;
    display: flex;
    border-top: 1px solid #888;
    background: linear-gradient(#fafafa, #dfe1e4);
    line-height: 17px;
}

.cell {
    display: flex;
    align-items: center;
    justify-content: space-between;
    padding: 0 5px;
    border-right: 1px solid #888;
    box-shadow: 1px 0 #fff;
    font-size: 10px;
    white-space: nowrap;
}

.count {
    font-size: 11px;
}

.view-name { width: 123px; }
.section { width: 78px; justify-content: flex-end; }
.pages { width: 132px; padding-right: 26px; }
.place { width: 155px; }
.words { width: 92px; justify-content: center; }
.proof { width: 38px; justify-content: center; }

.zoom {
    margin-left: auto;
    display: flex;
    align-items: center;
    gap: 12px;
}

.zoom input {
    appearance: none;
    width: 100px;
    height: 12px;
    margin: 0 6px 0 0;
    background: none;
}

.zoom input::-webkit-slider-runnable-track {
    height: 4px;
    border: 1px solid #777;
    border-radius: 3px;
    background: #aaa;
}

.zoom input::-webkit-slider-thumb {
    appearance: none;
    width: 12px;
    height: 12px;
    margin-top: -5px;
    border: 1px solid #777;
    border-radius: 50%;
    background: radial-gradient(circle, #555 20%, #f0f0f0 30%);
}
```
